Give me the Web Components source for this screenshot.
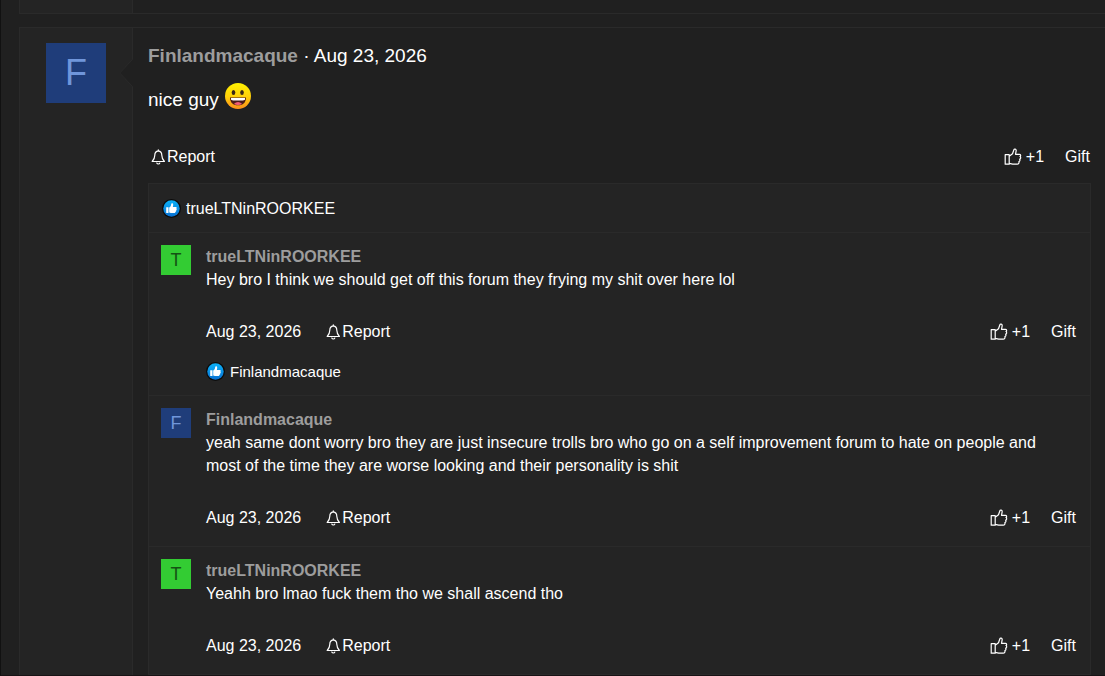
<!DOCTYPE html>
<html lang="en">
<head>
<meta charset="utf-8">
<title>Forum thread</title>
<style>
body { margin: 0; background: #202020; color: #fff; font: 16px/23px "Liberation Sans", Arial, sans-serif; --cell: #242424; --line: #2a2a2a; --name: #9d9d9d; }
forum-thread { min-height: 100vh; }
</style>
</head>
<body>
<forum-thread>
  <forum-post class="previous" tail></forum-post>
  <forum-post letter="F" name="Finlandmacaque" date="Aug 23, 2026">
    <span slot="message">nice guy <grin-emoji></grin-emoji></span>
    <post-actions slot="actions"></post-actions>
    <like-line slot="comments" class="lead" name="trueLTNinROORKEE"></like-line>
    <post-comment slot="comments" letter="T" name="trueLTNinROORKEE" date="Aug 23, 2026">Hey bro I think we should get off this forum they frying my shit over here lol<like-line slot="likes" class="small" name="Finlandmacaque"></like-line></post-comment>
    <post-comment slot="comments" letter="F" name="Finlandmacaque" date="Aug 23, 2026">yeah same dont worry bro they are just insecure trolls bro who go on a self improvement forum to hate on people and most of the time they are worse looking and their personality is shit</post-comment>
    <post-comment slot="comments" letter="T" name="trueLTNinROORKEE" date="Aug 23, 2026">Yeahh bro lmao fuck them tho we shall ascend tho</post-comment>
  </forum-post>
</forum-thread>
<script>
function define(name, render) {
  customElements.define(name, class extends HTMLElement {
    connectedCallback() {
      if (this.shadowRoot) return;
      this.attachShadow({ mode: "open" }).innerHTML = render(this);
    }
  });
}

define("forum-thread", () => `
<style>
  :host { display: block; box-sizing: border-box; height: 100vh; overflow: hidden; padding-left: 18px; border-left: 1px solid #111; border-bottom: 1px solid #181315; }
</style><slot></slot>`);

define("forum-post", el => el.hasAttribute("tail") ? `
<style>
  :host { display: flex; height: 13px; margin-bottom: 13px; border: solid var(--line); border-width: 0 0 1px 1px; }
  div { width: 112px; background: var(--cell); border-right: 1px solid var(--line); }
</style><div></div>` : `
<style>
  :host { display: flex; border: solid var(--line); border-width: 1px 0 0 1px; min-height: 100vh; }
  aside { position: relative; flex: none; width: 112px; background: var(--cell); border-right: 1px solid var(--line); padding-top: 15px; }
  letter-avatar { margin-left: 26px; }
  .notch { position: absolute; right: -1px; top: 31px; width: 14px; height: 28px; }
  article { flex: 1; min-width: 0; padding: 16px 14px 0 15px; }
  header { font-size: 19px; line-height: 24px; }
  header a { color: var(--name); font-weight: bold; text-decoration: none; }
  .message { font-size: 19px; line-height: 28px; margin: 14px 0 30px; }
  section { margin-top: 14px; background: var(--cell); border: 1px solid var(--line); }
</style>
<aside><letter-avatar letter="${el.getAttribute("letter")}" size="60"></letter-avatar>
<svg class="notch" viewBox="0 0 14 28" aria-hidden="true"><path d="M14 0L0 14L14 28Z" fill="#202020"/><path d="M13.5 0.5L.7 14L13.5 27.5" fill="none" stroke="#2a2a2a"/></svg></aside>
<article>
  <header><a href="#member">${el.getAttribute("name")}</a> · <time>${el.getAttribute("date")}</time></header>
  <div class="message"><slot name="message"></slot></div>
  <slot name="actions"></slot>
  <section><slot name="comments"></slot></section>
</article>`);

define("letter-avatar", el => {
  const size = el.getAttribute("size");
  const f = el.getAttribute("letter") === "F";
  return `
<style>
  :host { display: block; flex: none; width: ${size}px; height: ${size}px; background: ${f ? "#1f3d7a" : "#33cc33"}; color: ${f ? "#7096db" : "#145214"}; text-align: center; font-size: ${size === "60" ? 36 : 18}px; line-height: ${size}px; }
</style>${el.getAttribute("letter")}`;
});

define("post-actions", el => `
<style>
  :host { display: flex; align-items: center; height: 25px; padding-right: 1px; }
  time { margin-right: 22px; }
  a, button { display: flex; align-items: center; color: inherit; font: inherit; text-decoration: none; background: none; border: 0; padding: 0; }
  .report { margin-left: 3px; }
  button { margin-left: auto; gap: 4px; cursor: pointer; }
  .gift { margin-left: 21px; }
  svg { fill: none; stroke: #fff; stroke-width: 1.2; stroke-linejoin: round; stroke-linecap: round; }
</style>
${el.hasAttribute("date") ? `<time>${el.getAttribute("date")}</time>` : ""}
<a class="report" href="#report"><svg width="16" height="16" viewBox="0 0 16 16" aria-hidden="true"><path d="M7.3 1.8C4.8 2.1 3.8 4 3.8 6.3C3.8 9 3 10.5 1.2 12.5H13.4C11.6 10.5 10.8 9 10.8 6.3C10.8 4 9.8 2.1 7.3 1.8ZM7.3 1.7V.8M5.8 14.1C6.3 15.3 8.3 15.3 8.8 14.1"/></svg>Report</a>
<button type="button"><svg width="18" height="18" viewBox="0 0 18 18" aria-hidden="true"><path d="M1.2 6.7H5.2V16.2H1.2ZM5.2 8.2L8.5 5.7L9.9 1.7C10.3.6 12.3 1.1 12.2 2.6L11.5 6.3H15.4C16.9 6.3 17 8.1 16 8.5C17.2 9.2 16.7 11 15.6 11.2C16.3 12 15.9 13.3 14.9 13.5C15.3 15 14.6 16.2 13.2 16.2H8.7L5.2 15.3"/></svg>+1</button>
<a class="gift" href="#gift">Gift</a>`);

define("like-line", el => `
<style>
  :host { display: flex; align-items: center; gap: 5px; }
  :host(.lead) { padding: 13px 13px 12px; }
  :host(.small) { font-size: 15px; padding-bottom: 12px; }
  a { color: inherit; text-decoration: none; }
</style>
<svg width="19" height="19" viewBox="0 0 19 19" aria-hidden="true"><defs><linearGradient id="blue" x1="0" y1="0" x2="0" y2="1"><stop stop-color="#0bb2f8"/><stop offset="1" stop-color="#0870d2"/></linearGradient></defs><circle cx="9.5" cy="9.5" r="9.5" fill="#0c0c0c"/><circle cx="9.5" cy="9.5" r="8.2" fill="url(#blue)"/><path fill="#fff" d="M4.2 8.3H6.5V13.9H4.2ZM7.2 8.6C8.5 7.8 9 6.8 9.2 5C9.3 3.9 11.2 4 11.2 5.8C11.2 6.6 11 7.3 10.8 7.9H13.7C15 7.9 15.1 9.3 14.3 9.7C15 10.3 14.8 11.1 14 11.4C14.4 12 14.1 12.6 13.4 12.8C13.5 13.6 13 14 12.2 14H8.8L7.2 13.4Z"/></svg>
<a href="#member">${el.getAttribute("name")}</a>`);

define("post-comment", el => `
<style>
  :host { display: flex; gap: 15px; padding: 12px 13px 0 12px; border-top: 1px solid var(--line); }
  .body { flex: 1; min-width: 0; }
  .name { display: block; width: max-content; color: var(--name); font-weight: bold; text-decoration: none; }
  p { margin: 0 0 28px; padding-right: 16px; }
  post-actions { padding-bottom: 16px; }
</style>
<letter-avatar letter="${el.getAttribute("letter")}" size="30"></letter-avatar>
<div class="body">
  <a class="name" href="#member">${el.getAttribute("name")}</a>
  <p><slot></slot></p>
  <post-actions date="${el.getAttribute("date")}"></post-actions>
  <slot name="likes"></slot>
</div>`);

define("grin-emoji", () => `
<style>:host { display: inline-block; vertical-align: -4px; height: 28px; } svg { display: block; }</style>
<svg width="28" height="28" viewBox="0 0 28 28" role="img" aria-label="grinning face"><defs><linearGradient id="face" x1="0" y1="0" x2="0" y2="1"><stop stop-color="#fff200"/><stop offset=".55" stop-color="#ffce0a"/><stop offset="1" stop-color="#fb8c1c"/></linearGradient></defs><circle cx="14" cy="14" r="13" fill="url(#face)"/><ellipse cx="9.5" cy="10.5" rx="1.8" ry="2.5" fill="#3a2818"/><ellipse cx="18" cy="10.5" rx="1.8" ry="2.5" fill="#3a2818"/><path d="M6 15.5H22C22 20.5 19 23.3 14 23.3S6 20.5 6 15.5Z" fill="#4c1c18"/><path d="M7 16H21V17.2C21 18.2 20 18.5 14 18.5S7 18.2 7 17.2Z" fill="#fff"/><path d="M10 21.7Q14 18.5 18 21.7Q16.4 23 14 23T10 21.7Z" fill="#f25c73"/></svg>`);
</script>
</body>
</html>
